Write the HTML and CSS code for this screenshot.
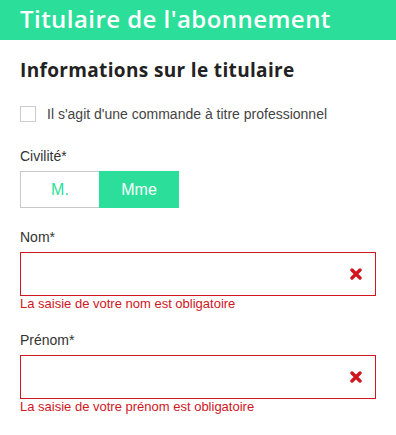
FILE: index.html
```html
<!DOCTYPE html>
<html lang="fr">
<head>
    <meta charset="UTF-8">
    <meta name="viewport" content="width=device-width, initial-scale=1.0">
    <title>Titulaire de l'abonnement</title>
    <link rel="stylesheet" href="styles.css">
</head>
<body>

    <h1 class="banner">Titulaire de l'abonnement</h1>

    <div class="content">
        <h2 class="section-title">Informations sur le titulaire</h2>

        <label class="check">
            <span class="box"></span>
            <span>Il s'agit d'une commande à titre professionnel</span>
        </label>

        <div class="field civility">
            <div class="label">Civilité*</div>
            <div class="toggle">
                <button class="opt">M.</button>
                <button class="opt active">Mme</button>
            </div>
        </div>

        <div class="field">
            <div class="label">Nom*</div>
            <div class="input error">
                <svg class="cross" width="12" height="12" viewBox="0 0 12 12">
                    <path d="M2 2L10 10M10 2L2 10" stroke="#d0161e" stroke-width="3.4" stroke-linecap="round"/>
                </svg>
            </div>
            <div class="msg">La saisie de votre nom est obligatoire</div>
        </div>

        <div class="field">
            <div class="label">Prénom*</div>
            <div class="input error">
                <svg class="cross" width="12" height="12" viewBox="0 0 12 12">
                    <path d="M2 2L10 10M10 2L2 10" stroke="#d0161e" stroke-width="3.4" stroke-linecap="round"/>
                </svg>
            </div>
            <div class="msg">La saisie de votre prénom est obligatoire</div>
        </div>
    </div>

</body>
</html>
```

FILE: styles.css
```css
body {
    margin: 0;
    background-color: #fff;
    font-family: 'Liberation Sans', Arial, sans-serif;
    color: #333;
}

.banner {
    margin: 0;
    height: 40px;
    padding: 0 20px;
    background-color: #2bdf9b;
    color: #fff;
    font-family: 'Open Sans', sans-serif;
    font-size: 24px;
    font-weight: 600;
    line-height: 38px;
    letter-spacing: 0.45px;
}

.content {
    padding: 0 20px;
}

.section-title {
    margin: 17px 0 0;
    font-family: 'Open Sans', sans-serif;
    font-size: 19px;
    font-weight: 700;
    line-height: 26px;
    letter-spacing: 0.35px;
    color: #222;
}

.check {
    display: flex;
    align-items: center;
    gap: 11px;
    margin-top: 23px;
    font-size: 14px;
    color: #444;
}

.box {
    width: 14px;
    height: 14px;
    border: 1px solid #ccc;
}

.field {
    margin-top: 20px;
}

.field.civility {
    margin-top: 25px;
}

.label {
    font-size: 14px;
    line-height: 18px;
    color: #333;
}

.toggle {
    display: flex;
    margin-top: 6px;
}

.opt {
    width: 79px;
    height: 37px;
    margin: 0;
    border: 1px solid #c8c8c8;
    border-right: none;
    background-color: #fff;
    color: #2bdf9b;
    font-family: 'Liberation Sans', Arial, sans-serif;
    font-size: 16px;
}

.opt.active {
    width: 80px;
    border: none;
    background-color: #2bdf9b;
    color: #fff;
}

.input {
    display: flex;
    align-items: center;
    justify-content: flex-end;
    height: 42px;
    margin-top: 6px;
    padding-right: 13px;
    border: 1px solid #ccc;
}

.input.error {
    border-color: #d0161e;
}

.msg {
    font-size: 13px;
    line-height: 15px;
    color: #d0161e;
}
```
